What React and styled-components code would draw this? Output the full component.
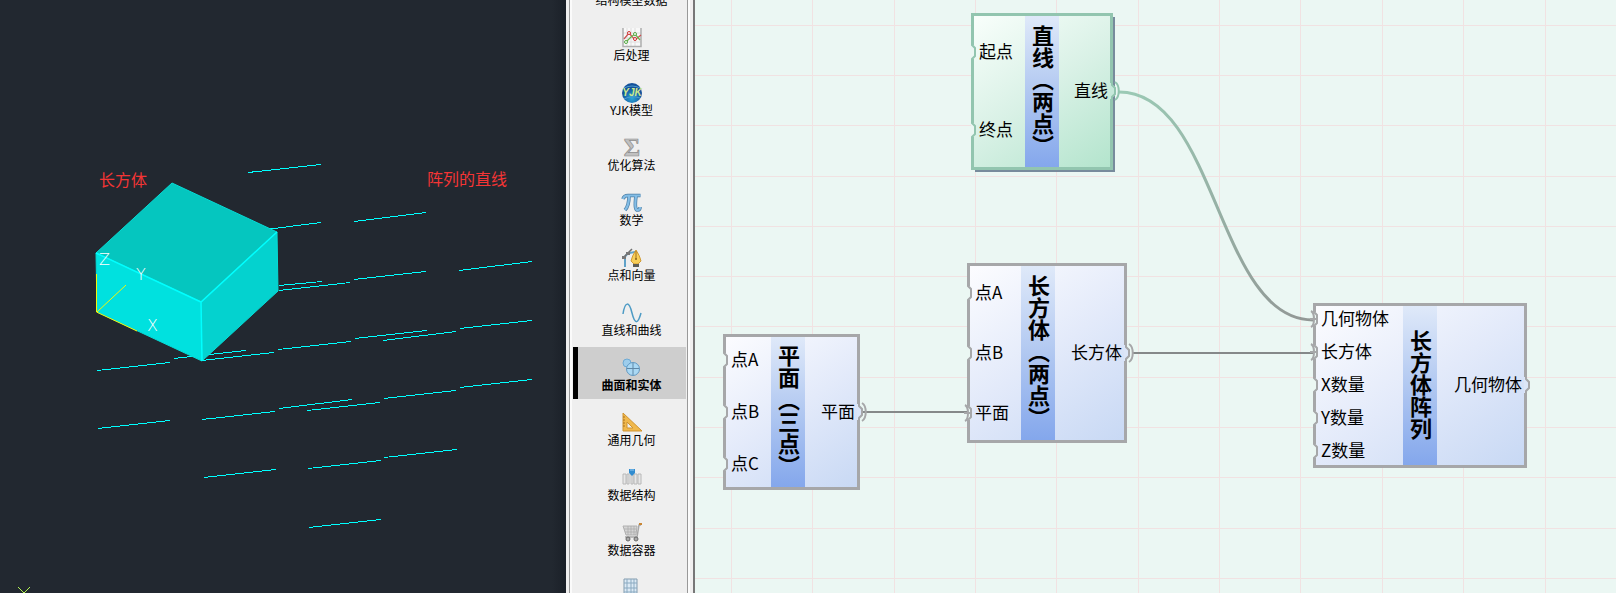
import React from "react";
import styled, { createGlobalStyle } from "styled-components";

const GlobalStyle = createGlobalStyle`
  * { box-sizing: border-box; }
  body { margin: 0; overflow: hidden; background: #f0f0f0; }
  body, button { font-family: "Noto Sans CJK SC", "Noto Sans", sans-serif; }
`;

const Page = styled.div`
  display: grid;
  grid-template-columns: 566fr 129px 921fr;
  height: 100vh;
  overflow: hidden;
`;

const Viewport = styled.main`
  min-width: 0;
  overflow: hidden;
  background: linear-gradient(to left, #1b2028, #222830 14px);
`;

const Scene = styled.svg`
  display: block;
  width: 100%;
  height: 100%;
`;

const SceneLabel = styled.text`
  font-family: "Noto Sans CJK SC", sans-serif;
  font-size: 16px;
  fill: #f43535;
`;

const AxisLabel = styled.text`
  font-family: "DejaVu Sans", sans-serif;
  font-weight: 200;
  font-size: 16px;
  fill: #ffffff;
`;

const Sidebar = styled.nav`
  display: flex;
  overflow: hidden;
  padding: 0 5px 0 3px;
  background: #f0efef;
  border-right: 2px solid #777777;
`;

const Palette = styled.div`
  flex: 1;
  display: flex;
  flex-direction: column;
  gap: 3px;
  margin-top: -38px;
  padding: 0 1px 0 3px;
  background: #efefef;
  border-left: 1px solid #999999;
  border-right: 1px solid #999999;
  box-shadow: inset 2px 0 0 #fbfbfb, 2px 0 0 #fbfbfb;
`;

const PaletteButton = styled.button`
  flex: none;
  display: flex;
  flex-direction: column;
  align-items: center;
  height: 52px;
  padding: 11px 1px 0 0;
  border: 0;
  border-left: 5px solid ${(p) => (p.$active ? "#000000" : "transparent")};
  background: ${(p) => (p.$active ? "#cecece" : "transparent")};
  background-clip: padding-box;
  color: #000000;
  font-size: 12px;
  font-weight: ${(p) => (p.$active ? 700 : 400)};
  line-height: 13px;
  white-space: nowrap;
`;

const Icon = styled.svg`
  display: block;
  flex: none;
  width: 20px;
  height: 20px;
  overflow: visible;
`;

const Canvas = styled.section`
  position: relative;
  min-width: 0;
  overflow: hidden;
  background: #ebf7f3;
`;

const Wires = styled.svg`
  position: absolute;
  inset: 0;
  width: 100%;
  height: 100%;
  overflow: visible;
`;

const themes = {
  blue: {
    edge: "#a6a7a9",
    notch: "#dce6f8",
    fill: "linear-gradient(145deg, #fdfdff, #e3eafa 50%, #c7d8f4)",
    shadow: "0 0 0 0 transparent",
  },
  green: {
    edge: "#92c5af",
    notch: "#c6e9da",
    fill: "linear-gradient(145deg, #fafffc, #d9f1e6 50%, #b2e4cc)",
    shadow: "3px 3px 0 -1px #778b9c",
  },
};

const NodeBox = styled.article`
  position: absolute;
  left: ${(p) => p.$x}px;
  top: ${(p) => p.$y}px;
  width: ${(p) => p.$w}px;
  height: ${(p) => p.$h}px;
  display: grid;
  grid-template-columns: ${(p) => p.$inputs}px 34px 1fr;
  background: ${(p) => themes[p.$tone].fill};
  box-shadow: inset 0 0 0 3px ${(p) => themes[p.$tone].edge}, ${(p) => themes[p.$tone].shadow};
`;

const PortColumn = styled.div`
  display: flex;
  flex-direction: column;
  justify-content: space-around;
`;

const Port = styled.div`
  position: relative;
  padding: ${(p) => (p.$out ? "0 5px 3px 0" : "0 0 3px 8px")};
  color: #000000;
  font-size: 17px;
  line-height: 24px;
  text-align: ${(p) => (p.$out ? "right" : "left")};
  white-space: nowrap;
`;

const PortMark = styled.svg`
  position: absolute;
  top: 2px;
  ${(p) => (p.$out ? "right: -8px;" : "left: -4px;")}
  width: 12px;
  height: 22px;
`;

const Title = styled.h2`
  display: flex;
  align-items: center;
  justify-content: center;
  margin: 3px 0;
  padding: 0 0 2px 2px;
  background: linear-gradient(to bottom, #dfe9f9, #b1c8f1 50%, #84a7ec);
  color: #000000;
  font-size: 22px;
  font-weight: 700;
  line-height: 32px;
  writing-mode: vertical-rl;
  white-space: nowrap;
`;

const segments = [
  [248, 172, 321, 164], [266, 229, 321, 222], [354, 221, 426, 212], [459, 270, 532, 261],
  [279, 285, 322, 281], [279, 290, 350, 282], [354, 279, 426, 271], [460, 328, 532, 320],
  [355, 338, 427, 330], [383, 340, 456, 331], [278, 349, 351, 341], [97, 370, 170, 362],
  [174, 358, 246, 350], [202, 360, 274, 352], [98, 428, 170, 420], [202, 419, 275, 411],
  [279, 408, 352, 399], [307, 410, 380, 402], [384, 398, 456, 390], [460, 387, 532, 379],
  [204, 477, 276, 469], [308, 468, 381, 460], [384, 457, 457, 449], [309, 527, 381, 519],
];

function CadView() {
  return (
    <Viewport>
      <Scene viewBox="0 0 566 593" preserveAspectRatio="xMinYMin slice">
        <g stroke="#00ffff" strokeWidth="1" shapeRendering="crispEdges">
          {segments.map(([a, b, c, d]) => (
            <line key={`${a}-${b}`} x1={a} y1={b + 0.5} x2={c} y2={d + 0.5} />
          ))}
        </g>
        <g stroke="#05dcd6" strokeLinejoin="round">
          <path d="M172 183 L277 232 L201 302 L96 253Z" fill="#05c6bf" />
          <path d="M96 253 L201 302 L202 361 L97 312Z" fill="#00e1df" />
          <path d="M201 302 L277 232 L278 291 L202 361Z" fill="#04d2cf" />
        </g>
        <path d="M96 253 L201 302 L277 232 M201 302 L202 361" fill="none" stroke="#00ffff" strokeWidth="1.5" />
        <path d="M96.5 274 V312 L137 331 M97 312 L126 285" fill="none" stroke="#f4f70a" />
        <AxisLabel x="99" y="265">Z</AxisLabel>
        <AxisLabel x="136" y="280">Y</AxisLabel>
        <AxisLabel x="147" y="331">X</AxisLabel>
        <SceneLabel x="99" y="186">长方体</SceneLabel>
        <SceneLabel x="427" y="185">阵列的直线</SceneLabel>
        <path d="M18 587 L24 593 L30 587" fill="none" stroke="#b4f554" />
      </Scene>
    </Viewport>
  );
}

const icons = {
  model: <path d="M3 3h14v14H3z" fill="#d8d8d8" stroke="#999" />,
  chart: (
    <>
      <path d="M1 0h17v18H1z" fill="#f8f8f8" />
      <path d="M5 0v18M9 0v18M13 0v18M1 5h18M1 10h18M1 14h18" stroke="#dedede" />
      <path d="M1 0v18.500h18V0" fill="none" stroke="#aeaeae" strokeWidth="1.500" />
      <path d="M2 11l5-6 6 7 6-5" fill="none" stroke="#ce5050" strokeWidth="1.200" />
      <path d="M3 15l6-6 4-3 5 6" fill="none" stroke="#6bb04c" strokeWidth="1.200" />
      <g fill="#fff" strokeWidth="1"><circle cx="7" cy="5" r="1.500" stroke="#c33" /><circle cx="13" cy="11" r="1.500" stroke="#c33" /><circle cx="13" cy="6" r="1.500" stroke="#5a4" /><circle cx="4" cy="14" r="1.500" stroke="#5a4" /></g>
    </>
  ),
  yjk: (
    <>
      <defs>
        <radialGradient id="globe" cx="50%" cy="75%"><stop offset="0" stopColor="#2aa8d8" /><stop offset="1" stopColor="#14519a" /></radialGradient>
      </defs>
      <circle cx="10" cy="10" r="10" fill="url(#globe)" />
      <path d="M2 5Q10 1 18 5M2 16Q10 12 18 15" fill="none" stroke="#4d9cce" />
      <text x="10" y="13" textAnchor="middle" fontFamily="Liberation Sans, sans-serif" fontSize="10" fontWeight="700" fontStyle="italic" fill="#cdea8c">YJK</text>
    </>
  ),
  sigma: (
    <text x="10" y="18" textAnchor="middle" fontFamily="Liberation Serif, serif" fontSize="25" fontWeight="700" fill="#c0c0c0" stroke="#8c8c8c" strokeWidth="0.700">Σ</text>
  ),
  pi: (
    <g fill="none" strokeLinejoin="round">
      <path d="M1 6Q2 2.500 6 2.500H18.500M7 3Q7 13 3 17M14 3Q12 18 16 17Q18 17 18 14" stroke="#4c7ea5" strokeWidth="3.600" />
      <path d="M1 6Q2 2.500 6 2.500H18.500M7 3Q7 13 3 17M14 3Q12 18 16 17Q18 17 18 14" stroke="#83bde6" strokeWidth="2.200" />
    </g>
  ),
  pen: (
    <>
      <path d="M3 19V10Q3 5 13 4" fill="none" stroke="#60a2c8" strokeWidth="2" />
      <path d="M1 10L10 1" stroke="#707070" strokeWidth="1.500" />
      <path d="M0 8h4v3H0zM4 4h4v3H4z" fill="#777" />
      <path d="M14 2Q18 8 19 13L16 16h-4l-3-3Q10 8 14 2z" fill="#f8cf58" stroke="#d09a35" />
      <path d="M14 3v8" stroke="#a27120" /><circle cx="14" cy="11" r="1" fill="#8b641d" />
      <path d="M11 16h6v3h-6z" fill="#5c5c55" />
    </>
  ),
  wave: <path d="M1 11C3 -2 7 -2 10 10C13 22 16 21 19 10" fill="none" stroke="#4d9bc5" strokeWidth="1.500" />,
  solids: (
    <>
      <circle cx="5" cy="5" r="4" fill="#9dcdec" stroke="#6eaad4" />
      <circle cx="11" cy="11" r="6.500" fill="#a9d8f4" stroke="#6199c3" />
      <path d="M11 5v12M5 10.500h12" stroke="#5f87a6" />
    </>
  ),
  triangle: (
    <>
      <path d="M1 0v18h19z" fill="#f0b84c" stroke="#cf9431" />
      <path d="M5 9v6h6z" fill="#efefef" stroke="#cf9431" />
      <path d="M1 4h2M1 7h2M1 10h2M1 13h2" stroke="#a87320" />
    </>
  ),
  structure: (
    <>
      <path d="M1 6h3v10H1zM5 6h2v10H5zM9 6h2v10H9zM12 6h3v10h-3zM16 6h3v10h-3z" fill="#e7e7e7" stroke="#b8b8b8" />
      <path d="M7 1h6v4l-3 3-3-3z" fill="#318cd0" />
      <path d="M8 2h4" stroke="#94c8ee" />
    </>
  ),
  cart: (
    <>
      <path d="M1 3h14l-1 9H4z" fill="#d5d5d5" stroke="#b0b0b0" />
      <path d="M2 6h12M3 9h11M6 3v9M9 3v9M12 3v9" stroke="#aaa" strokeWidth="0.700" />
      <path d="M3 14h12l2-12h2" fill="none" stroke="#a8a8a8" strokeWidth="1.500" />
      <path d="M17 0h3v2h-3z" fill="#c98634" />
      <circle cx="6" cy="16" r="2" fill="#aaa" stroke="#666" /><circle cx="14" cy="16" r="2" fill="#aaa" stroke="#666" />
    </>
  ),
  table: (
    <>
      <path d="M2 1h13v18H2z" fill="#dceaf5" stroke="#839caf" />
      <path d="M5 1v17M9 1v17M12 1v17M2 5h13M2 10h13M2 14h13" stroke="#8baac1" />
      <path d="M1 16h8v4H1z" fill="#6a9948" /><path d="M9 15h9v5H9z" fill="#727272" />
    </>
  ),
};

const categories = [
  ["model", "结构模型数据"], ["chart", "后处理"], ["yjk", "YJK模型"], ["sigma", "优化算法"],
  ["pi", "数学"], ["pen", "点和向量"], ["wave", "直线和曲线"], ["solids", "曲面和实体"],
  ["triangle", "通用几何"], ["structure", "数据结构"], ["cart", "数据容器"], ["table", ""],
];

function PortShape({ out, linked, tone }) {
  const { edge, notch } = themes[tone];
  return (
    <PortMark $out={out} viewBox="0 0 12 22" aria-hidden="true">
      {out ? (
        <>
          <path d="M1 3H4V5L7 8V14L4 17V19H1Z" fill={notch} />
          <path d="M3 2V5L6 8V14L3 17V20" fill="none" stroke={edge} strokeWidth="2" />
          {linked && <path d="M6 2C11 5 11 17 6 20" fill="none" stroke={edge} strokeWidth="2" />}
        </>
      ) : (
        <>
          <path d="M4 4H7L9 7V15L7 18H4Z" fill="#ebf7f3" />
          <path d="M5 2V4L8 7V15L5 18V20" fill="none" stroke={edge} strokeWidth="2" />
          {linked && <path d="M2 3C6 5 6 17 2 19M1 11H7" fill="none" stroke={edge} strokeWidth="2" />}
        </>
      )}
    </PortMark>
  );
}

function GraphNode({ x, y, w, h, inputsWidth, tone = "blue", title, inputs, output }) {
  return (
    <NodeBox $x={x} $y={y} $w={w} $h={h} $inputs={inputsWidth} $tone={tone}>
      <PortColumn>
        {inputs.map(([name, linked]) => (
          <Port key={name}><PortShape linked={linked} tone={tone} />{name}</Port>
        ))}
      </PortColumn>
      <Title>{title}</Title>
      <PortColumn>
        <Port $out><PortShape out linked={output[1]} tone={tone} />{output[0]}</Port>
      </PortColumn>
    </NodeBox>
  );
}

const nodes = [
  { x: 276, y: 13, w: 142, h: 157, inputsWidth: 54, tone: "green", title: "直线（两点）", inputs: [["起点"], ["终点"]], output: ["直线", true] },
  { x: 28, y: 334, w: 137, h: 156, inputsWidth: 48, title: "平面（三点）", inputs: [["点A"], ["点B"], ["点C"]], output: ["平面", true] },
  { x: 272, y: 263, w: 160, h: 180, inputsWidth: 54, title: "长方体（两点）", inputs: [["点A"], ["点B"], ["平面", true]], output: ["长方体", true] },
  { x: 618, y: 303, w: 214, h: 165, inputsWidth: 90, title: "长方体阵列", inputs: [["几何物体", true], ["长方体", true], ["X数量"], ["Y数量"], ["Z数量"]], output: ["几何物体", false] },
];

const gridX = [36, 117, 199, 280, 361, 443, 524, 605, 687, 768, 850];
const gridY = [25, 75, 125, 176, 226, 276, 326, 377, 427, 477, 528, 578];

export default function App() {
  return (
    <>
      <GlobalStyle />
      <Page>
        <CadView />
        <Sidebar>
          <Palette>
            {categories.map(([icon, name]) => (
              <PaletteButton key={icon} type="button" $active={icon === "solids"}>
                <Icon viewBox="0 0 20 20" aria-hidden="true">{icons[icon]}</Icon>
                {name}
              </PaletteButton>
            ))}
          </Palette>
        </Sidebar>
        <Canvas>
          <Wires aria-hidden="true">
            <defs>
              <linearGradient id="wire" x1="0" y1="0" x2="1" y2="1">
                <stop offset="0" stopColor="#9bcab5" />
                <stop offset="1" stopColor="#929795" />
              </linearGradient>
            </defs>
            <g stroke="#f1e2e2" shapeRendering="crispEdges">
              {gridX.map((x) => <line key={x} x1={x + 0.5} x2={x + 0.5} y1="0" y2="100%" />)}
              {gridY.map((y) => <line key={y} x1="0" x2="100%" y1={y + 0.5} y2={y + 0.5} />)}
            </g>
            <path d="M424 92C522 92 522 320 618 320" fill="none" stroke="url(#wire)" strokeWidth="3" />
            <path d="M438 353H618M168 412H272" fill="none" stroke="#858989" strokeWidth="2" />
          </Wires>
          {nodes.map((node) => <GraphNode key={node.title} {...node} />)}
        </Canvas>
      </Page>
    </>
  );
}
